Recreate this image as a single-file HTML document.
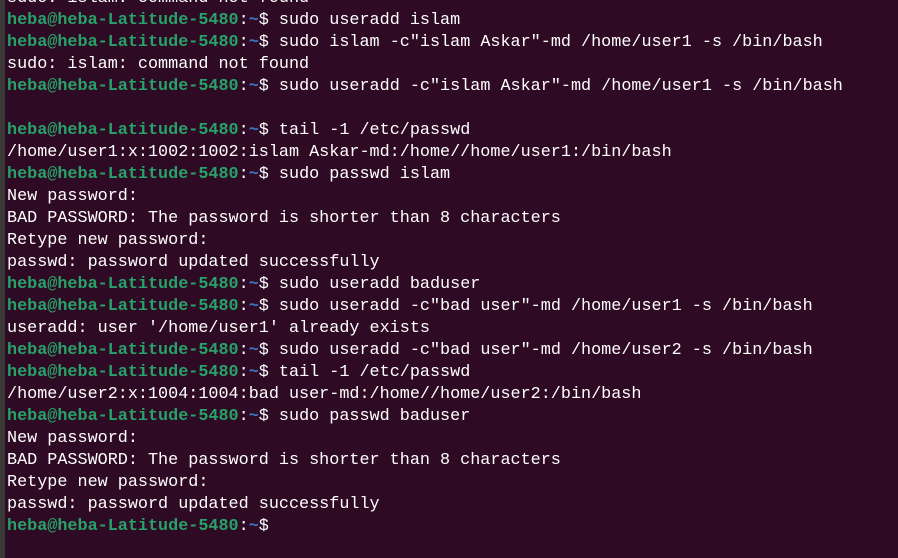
<!DOCTYPE html>
<html><head><style>
html,body{margin:0;padding:0;width:898px;height:558px;overflow:hidden;background:#2f0a24;}
.strip{position:absolute;left:0;top:0;width:5px;height:558px;background:#3b3838;}
pre{position:absolute;left:7px;top:-12px;margin:0;font-family:"Liberation Mono","DejaVu Sans Mono",monospace;font-size:16.8px;line-height:22px;color:#ffffff;}
.g{color:#26a269;font-weight:bold;}
.b{color:#3a78c6;font-weight:bold;}
</style></head><body><div class="strip"></div><pre>sudo: islam: command not found
<span class="g">heba@heba-Latitude-5480</span>:<span class="b">~</span>$ sudo useradd islam
<span class="g">heba@heba-Latitude-5480</span>:<span class="b">~</span>$ sudo islam -c"islam Askar"-md /home/user1 -s /bin/bash
sudo: islam: command not found
<span class="g">heba@heba-Latitude-5480</span>:<span class="b">~</span>$ sudo useradd -c"islam Askar"-md /home/user1 -s /bin/bash

<span class="g">heba@heba-Latitude-5480</span>:<span class="b">~</span>$ tail -1 /etc/passwd
/home/user1:x:1002:1002:islam Askar-md:/home//home/user1:/bin/bash
<span class="g">heba@heba-Latitude-5480</span>:<span class="b">~</span>$ sudo passwd islam
New password: 
BAD PASSWORD: The password is shorter than 8 characters
Retype new password: 
passwd: password updated successfully
<span class="g">heba@heba-Latitude-5480</span>:<span class="b">~</span>$ sudo useradd baduser
<span class="g">heba@heba-Latitude-5480</span>:<span class="b">~</span>$ sudo useradd -c"bad user"-md /home/user1 -s /bin/bash
useradd: user '/home/user1' already exists
<span class="g">heba@heba-Latitude-5480</span>:<span class="b">~</span>$ sudo useradd -c"bad user"-md /home/user2 -s /bin/bash
<span class="g">heba@heba-Latitude-5480</span>:<span class="b">~</span>$ tail -1 /etc/passwd
/home/user2:x:1004:1004:bad user-md:/home//home/user2:/bin/bash
<span class="g">heba@heba-Latitude-5480</span>:<span class="b">~</span>$ sudo passwd baduser
New password: 
BAD PASSWORD: The password is shorter than 8 characters
Retype new password: 
passwd: password updated successfully
<span class="g">heba@heba-Latitude-5480</span>:<span class="b">~</span>$ </pre></body></html>
